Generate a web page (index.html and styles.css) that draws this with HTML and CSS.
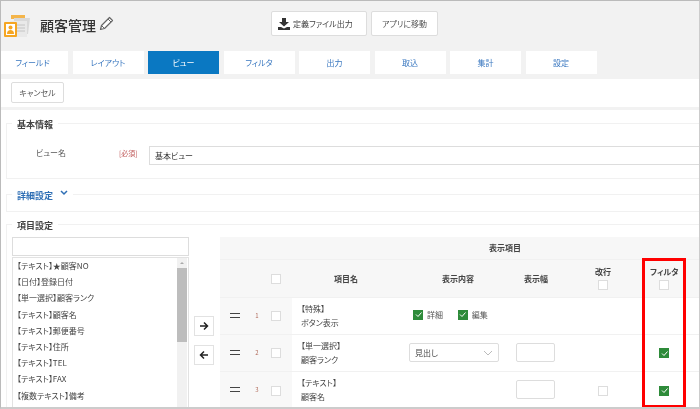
FILE: index.html
```html
<!DOCTYPE html>
<html lang="ja">
<head>
<meta charset="utf-8">
<title>顧客管理</title>
<link rel="stylesheet" href="styles.css">
</head>
<body>
<div class="page">
  <header class="head">
    <svg class="app-icon" width="28" height="24" viewBox="0 0 28 24">
      <path d="M8 1h14v4H8z" fill="#f4b54a"/>
      <path d="M11 4h16l-2 16H11z" fill="#d9d9d9"/>
      <path d="M7 7h17v16H7z" fill="#e9e9e9"/>
      <path d="M13 11h9M13 14h9M13 17h9" stroke="#c4c4c4" fill="none"/>
      <rect x="1" y="8" width="13" height="15" rx="1" fill="#f5a623"/>
      <rect x="3" y="10" width="9" height="11" fill="#fff"/>
      <circle cx="7.5" cy="13.5" r="2" fill="#f5a623"/>
      <path d="M4 20c0-3 1.500-4 3.500-4s3.500 1 3.500 4z" fill="#f5a623"/>
    </svg>
    <h1 class="title">顧客管理</h1>
    <svg class="pencil" width="15" height="15" viewBox="0 0 15 15">
      <path d="M1.500 13.500l1-4L10.500 1.500l3 3-8 8z" fill="#fff" stroke="#666" stroke-width="1.200" stroke-linejoin="round"/>
      <path d="M9 3l3 3M2.500 9.500l3 3" stroke="#666" fill="none"/>
    </svg>
    <button class="btn btn-export">
      <svg width="12" height="12" viewBox="0 0 12 12"><path d="M4 0h4v4h3L6 8.500 1 4h3zM0 9h3l3 1.500L9 9h3v3H0z" fill="#333"/></svg>
      定義ファイル出力
    </button>
    <button class="btn btn-move">アプリに移動</button>
  </header>
  <nav class="tabs">
    <a class="tab">フィールド</a>
    <a class="tab">レイアウト</a>
    <a class="tab active">ビュー</a>
    <a class="tab">フィルタ</a>
    <a class="tab">出力</a>
    <a class="tab">取込</a>
    <a class="tab">集計</a>
    <a class="tab">設定</a>
  </nav>
  <div class="toolbar"><button class="btn btn-cancel">キャンセル</button></div>
  <main class="content">
    <fieldset class="section section-basic">
      <legend>基本情報</legend>
      <div class="field-row">
        <span class="field-label">ビュー名</span>
        <span class="required">[必須]</span>
        <div class="text-input name-input">基本ビュー</div>
      </div>
    </fieldset>
    <fieldset class="section section-detail">
      <legend class="link">詳細設定
        <svg class="chev" width="8" height="6" viewBox="0 0 8 6"><path d="M1 1l3 3 3-3" fill="none" stroke="#2f6fb5" stroke-width="1.500"/></svg>
      </legend>
    </fieldset>
    <fieldset class="section section-items">
      <legend>項目設定</legend>
      <div class="items">
        <div class="picker">
          <div class="search"></div>
          <div class="list">
            <ul>
              <li>【テキスト】★顧客NO</li>
              <li>【日付】登録日付</li>
              <li>【単一選択】顧客ランク</li>
              <li>【テキスト】顧客名</li>
              <li>【テキスト】郵便番号</li>
              <li>【テキスト】住所</li>
              <li>【テキスト】TEL</li>
              <li>【テキスト】FAX</li>
              <li>【複数テキスト】備考</li>
            </ul>
            <div class="scrollbar"><i class="scroll-up"></i><div class="thumb"></div></div>
          </div>
        </div>
        <div class="movers">
          <button class="mover"><svg width="10" height="10" viewBox="0 0 10 10"><path d="M1 5h7M5 1.500L8.500 5 5 8.500" fill="none" stroke="#222" stroke-width="1.500"/></svg></button>
          <button class="mover"><svg width="10" height="10" viewBox="0 0 10 10"><path d="M9 5H2M5 1.500L1.500 5 5 8.500" fill="none" stroke="#222" stroke-width="1.500"/></svg></button>
        </div>
        <table class="grid">
          <colgroup>
            <col class="c-drag"><col class="c-num"><col class="c-check"><col class="c-name"><col class="c-disp"><col class="c-width"><col class="c-break"><col class="c-filter"><col class="c-rest">
          </colgroup>
          <thead>
            <tr class="head-top"><th colspan="9"><span class="head-top-label">表示項目</span></th></tr>
            <tr class="head-cols">
              <th></th><th></th>
              <th class="chk"><i class="cb"></i></th>
              <th>項目名</th>
              <th>表示内容</th>
              <th>表示幅</th>
              <th class="stack">改行<i class="cb"></i></th>
              <th class="stack">フィルタ<i class="cb"></i></th>
              <th></th>
            </tr>
          </thead>
          <tbody>
            <tr>
              <td class="shade"><i class="drag"></i></td>
              <td class="shade num">1</td>
              <td class="shade chk"><i class="cb"></i></td>
              <td class="name">【特殊】<br>ボタン表示</td>
              <td colspan="2" class="options">
                <span class="opt"><i class="cb on"><svg width="9" height="9" viewBox="0 0 9 9"><path d="M2 4.500l2 2 3.500-4" fill="none" stroke="#fff"/></svg></i>詳細</span>
                <span class="opt"><i class="cb on"><svg width="9" height="9" viewBox="0 0 9 9"><path d="M2 4.500l2 2 3.500-4" fill="none" stroke="#fff"/></svg></i>編集</span>
              </td>
              <td></td><td></td><td></td>
            </tr>
            <tr>
              <td class="shade"><i class="drag"></i></td>
              <td class="shade num">2</td>
              <td class="shade chk"><i class="cb"></i></td>
              <td class="name">【単一選択】<br>顧客ランク</td>
              <td><div class="select">見出し<svg width="10" height="6" viewBox="0 0 10 6"><path d="M1 1l4 4 4-4" fill="none" stroke="#bbb"/></svg></div></td>
              <td><div class="width-input"></div></td>
              <td></td>
              <td><i class="cb on"><svg width="9" height="9" viewBox="0 0 9 9"><path d="M2 4.500l2 2 3.500-4" fill="none" stroke="#fff"/></svg></i></td>
              <td></td>
            </tr>
            <tr>
              <td class="shade"><i class="drag"></i></td>
              <td class="shade num">3</td>
              <td class="shade chk"><i class="cb"></i></td>
              <td class="name">【テキスト】<br>顧客名</td>
              <td></td>
              <td><div class="width-input"></div></td>
              <td><i class="cb"></i></td>
              <td><i class="cb on"><svg width="9" height="9" viewBox="0 0 9 9"><path d="M2 4.500l2 2 3.500-4" fill="none" stroke="#fff"/></svg></i></td>
              <td></td>
            </tr>
          </tbody>
        </table>
        <div class="highlight"></div>
      </div>
    </fieldset>
  </main>
</div>
</body>
</html>
```
FILE: styles.css
```css
* { box-sizing: border-box; }
html, body { margin: 0; padding: 0; background: #fff; }
body {
  width: 700px;
  height: 409px;
  overflow: hidden;
  font-family: "Noto Sans CJK JP", "Liberation Sans", sans-serif;
  font-size: 8px;
  font-feature-settings: "palt";
  color: #444;
}
.page {
  width: 700px;
  height: 409px;
  overflow: hidden;
  display: flex;
  flex-direction: column;
  background: #f2f2f2;
  border-top: 1px solid #bbb;
  border-left: 1px solid #bbb;
  border-right: 1px solid #ccc;
  border-bottom: 2px solid #ccc;
  filter: blur(0.35px);
}
.head {
  height: 50px;
  flex: none;
  display: flex;
  align-items: flex-start;
  padding-left: 2px;
}
.app-icon { margin-top: 13px; flex: none; }
.title {
  margin: 14px 0 0 9px;
  font-size: 14px;
  line-height: 20px;
  font-weight: 500;
  font-feature-settings: normal;
  color: #333;
  white-space: nowrap;
}
.pencil { margin: 15px 0 0 3px; flex: none; }
.btn {
  font-family: inherit;
  font-size: 8px;
  font-feature-settings: inherit;
  background: #fff;
  border: 1px solid #ddd;
  border-radius: 2px;
  color: #555;
  padding: 0;
}
.btn-export {
  width: 96px;
  height: 25px;
  margin: 10px 0 0 157px;
  flex: none;
  display: flex;
  align-items: center;
  justify-content: flex-start;
  gap: 3px;
  padding-left: 6px;
  color: #444;
}
.btn-move { width: 67px; height: 25px; margin: 10px 0 0 4px; flex: none; }
.tabs {
  height: 23px;
  flex: none;
  display: flex;
  gap: 4.500px;
}
.tab {
  width: 71px;
  flex: none;
  background: #fff;
  color: #3a78c0;
  display: flex;
  align-items: center;
  justify-content: center;
}
.tab:first-child { width: 67px; padding-right: 4px; }
.tab.active { background: #0a78c2; color: #fff; }
.toolbar {
  height: 28px;
  flex: none;
  margin-top: 5px;
  background: #fff;
  padding: 3px 0 0 10px;
}
.btn-cancel { width: 53px; height: 21px; display: block; }
.content {
  margin-top: 3px;
  flex: 1;
  min-height: 0;
  background: #fff;
  padding: 5px 0 0 5px;
  overflow: hidden;
}
.section {
  border: 1px solid #f1f1f1;
  border-right: 0;
  margin: 0;
  padding: 0;
  min-width: 0;
  width: 800px;
}
.section legend {
  margin-left: 5px;
  padding: 4px 5px 0;
  font-size: 9px;
  line-height: 12px;
  font-weight: 700;
  color: #444;
  white-space: nowrap;
}
.section legend.link { color: #2f6fb5; }
.chev { vertical-align: 3px; margin-left: 5px; }
.section-basic { height: 64px; }
.section-detail { height: 26px; margin-top: 7px; }
.section-items { margin-top: 4px; height: 300px; }
.field-row {
  display: flex;
  align-items: flex-start;
  padding-top: 15px;
}
.field-label { margin-left: 29px; width: 83px; line-height: 14px; font-size: 8px; color: #555; }
.required { width: 30px; color: #c05a5a; font-size: 7px; line-height: 14px; }
.text-input {
  height: 19px;
  border: 1px solid #ddd;
  background: #fff;
  padding-left: 5px;
  line-height: 18px;
  color: #333;
}
.name-input { width: 600px; }
.items {
  position: relative;
  display: flex;
  align-items: flex-start;
  padding: 5px 0 0 5px;
}
.picker { width: 177px; flex: none; }
.search { height: 19px; border: 1px solid #ddd; background: #fff; }
.list {
  height: 170px;
  margin-top: 1px;
  border: 1px solid #e2e2e2;
  display: flex;
  background: #fff;
}
.list ul {
  flex: 1;
  margin: 0;
  padding: 0 0 0 4px;
  list-style: none;
  line-height: 16.200px;
  color: #444;
  white-space: nowrap;
}
.scrollbar {
  width: 10px;
  flex: none;
  margin-right: 1px;
  background: #f1f1f1;
  padding-top: 10px;
  position: relative;
}
.scroll-up {
  position: absolute;
  top: 4px;
  left: 3px;
  border: 2px solid transparent;
  border-bottom: 2px solid #aaa;
  border-top: 0;
}
.thumb { height: 74px; background: #bdbdbd; }
.movers {
  width: 20px;
  flex: none;
  margin: 79px 0 0 5px;
  display: flex;
  flex-direction: column;
  gap: 9px;
}
.mover {
  width: 20px;
  height: 20px;
  padding: 0;
  background: #fff;
  border: 1px solid #e2e2e2;
  display: flex;
  align-items: center;
  justify-content: center;
}
.grid {
  flex: none;
  width: 480px;
  margin-left: 6px;
  table-layout: fixed;
  border-collapse: collapse;
  font-size: 8px;
  color: #444;
}
.c-drag { width: 30px; }
.c-num { width: 14px; }
.c-check { width: 28px; }
.c-name { width: 108px; }
.c-disp { width: 116px; }
.c-width { width: 40px; }
.c-break { width: 94px; }
.c-filter { width: 28px; }
.c-rest { width: 22px; }
.grid th, .grid td { padding: 0; text-align: center; }
.grid th.chk, .grid td.chk { padding-right: 4px; }
.head-top th {
  height: 22px;
  background: #f7f7f7;
  font-weight: 700;
}
.head-top-label { position: relative; left: 45px; }
.head-cols th {
  height: 38px;
  background: #f7f7f7;
  font-weight: 700;
  border-top: 1px solid #f1f1f1;
  white-space: nowrap;
}
.head-cols .stack { line-height: 10px; }
.head-cols .stack .cb { display: block; margin: 3px auto 0; }
.grid tbody tr { height: 37px; border-top: 1px solid #f1f1f1; }
.shade { background: #f8f8f8; }
.num { color: #b06a5a; font-size: 6px; }
.grid td.name { text-align: left; padding-left: 9px; line-height: 14px; color: #444; white-space: nowrap; }
.cb {
  display: inline-block;
  width: 10px;
  height: 10px;
  border: 1px solid #ddd;
  background: #fff;
  vertical-align: middle;
}
.cb.on {
  background: #2e8b3a;
  border-color: #2e8b3a;
  position: relative;
}
.cb.on svg { position: absolute; left: -0.500px; top: -0.500px; }
.drag {
  display: block;
  width: 10px;
  height: 5px;
  margin: 0 auto;
  border-top: 1.500px solid #444;
  border-bottom: 1.500px solid #444;
}
.grid td.options { text-align: left; padding-left: 13px; white-space: nowrap; }
.opt { display: inline-flex; align-items: center; gap: 4px; margin-right: 13px; color: #555; }
.select {
  width: 90px;
  height: 19px;
  margin-left: 9px;
  border: 1px solid #ddd;
  border-radius: 2px;
  display: flex;
  align-items: center;
  justify-content: space-between;
  padding: 0 5px;
  background: #fff;
}
.width-input {
  width: 39px;
  height: 19px;
  border: 1px solid #ddd;
  border-radius: 2px;
  background: #fff;
}
.highlight {
  position: absolute;
  left: 635px;
  top: 26px;
  width: 44px;
  height: 150px;
  border: 3px solid #f00;
}
```
